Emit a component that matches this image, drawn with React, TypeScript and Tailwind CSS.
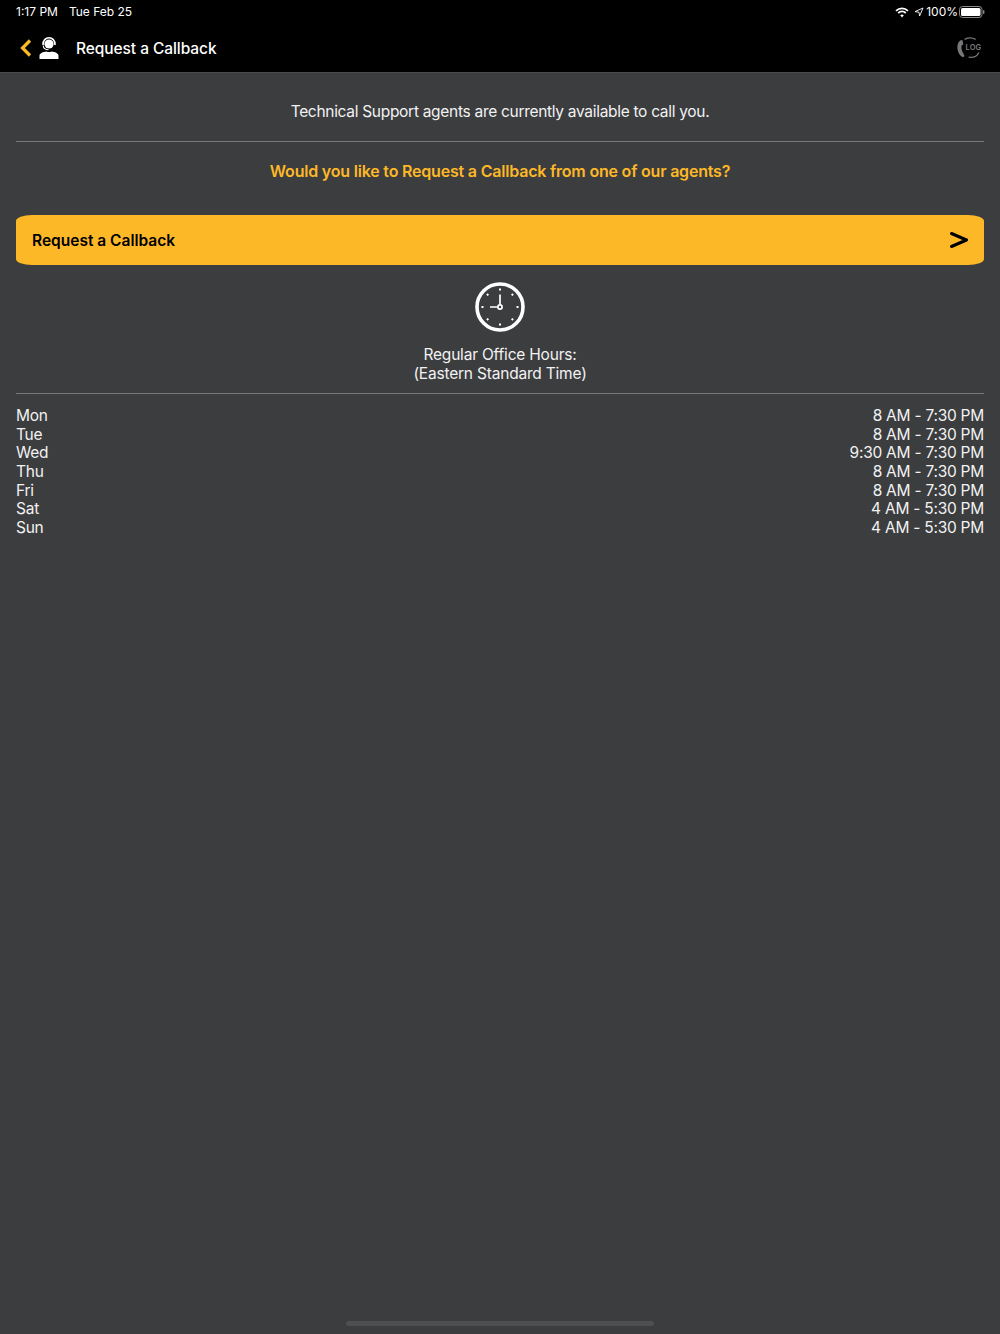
const hours = [
  ["Mon", "8 AM - 7:30 PM"],
  ["Tue", "8 AM - 7:30 PM"],
  ["Wed", "9:30 AM - 7:30 PM"],
  ["Thu", "8 AM - 7:30 PM"],
  ["Fri", "8 AM - 7:30 PM"],
  ["Sat", "4 AM - 5:30 PM"],
  ["Sun", "4 AM - 5:30 PM"],
];

function Wifi() {
  return (
    <svg width="14" height="11" viewBox="0 0 14 11" fill="none" stroke="white" strokeWidth="1.8">
      <path d="M1 3.8C4.4 0.6 9.6 0.6 13 3.8" />
      <path d="M3.2 6C5.4 4 8.6 4 10.8 6" />
      <path d="M7 10.6L5.2 8.2C6.2 7.4 7.8 7.4 8.8 8.2Z" fill="white" stroke="none" />
    </svg>
  );
}

function Arrow() {
  return (
    <svg width="10" height="10" viewBox="0 0 10 10" fill="none" stroke="white" strokeWidth="0.9">
      <path d="M9 1L1 4.6L5 5.2L5.6 9Z" strokeLinejoin="round" />
    </svg>
  );
}

function Battery() {
  return (
    <svg width="26" height="12" viewBox="0 0 26 12">
      <rect x="0.5" y="0.5" width="22.5" height="11" rx="3" fill="none" stroke="#8a8a8a" />
      <rect x="2" y="2" width="19.5" height="8" rx="1.6" fill="white" />
      <rect x="24" y="4" width="1.4" height="4" rx="0.7" fill="#8a8a8a" />
    </svg>
  );
}

function Agent() {
  return (
    <svg width="20" height="23" viewBox="0 0 20 23" fill="white">
      <circle cx="10" cy="8" r="4.6" />
      <path d="M4 9C3.4 -0.6 16.6 -0.6 16 9" fill="none" stroke="white" strokeWidth="1.6" />
      <path d="M4.4 9.5C4.6 12.4 6.4 14 9.6 14" fill="none" stroke="black" strokeWidth="2.4" />
      <path d="M4.2 9.5C4.4 12.4 6.2 13.8 9.6 13.8" fill="none" stroke="white" strokeWidth="1.1" />
      <path d="M0.5 23V19.6C0.5 17.2 4.2 15.8 7.4 15.4C9 16.2 11 16.2 12.6 15.4C15.8 15.8 19.5 17.2 19.5 19.6V23Z" />
    </svg>
  );
}

function LogIcon() {
  return (
    <svg width="24" height="22" viewBox="0 0 24 22" fill="none">
      <path d="M7.6 2.6C10 0.6 14.6 0 18.6 2.4" stroke="#77787a" strokeWidth="1.3" />
      <path d="M21.8 15.4C20.4 18.8 16.4 20.8 11.6 20.2" stroke="#77787a" strokeWidth="1.3" />
      <path d="M3.6 3.2C0.8 5 0 9 0.6 12.6C1.2 16.2 3.2 19.4 6 20.2L7.6 19L5.6 15C4.4 12.4 4 10 4.8 8.2L6.2 7.4L5.6 3.2Z" fill="#77787a" />
      <text x="8.6" y="13" fontSize="7.6" fontWeight="600" fill="#77787a" fontFamily="Inter, sans-serif">LOG</text>
    </svg>
  );
}

function Clock() {
  const ticks = [0, 45, 90, 135, 180, 225, 270, 315];
  return (
    <svg width="50" height="50" viewBox="0 0 50 50" fill="none" stroke="white">
      <circle cx="25" cy="25" r="23" strokeWidth="3.6" />
      {ticks.map((a) => (
        <rect
          key={a}
          x="24"
          y="6.5"
          width="2"
          height="2"
          fill="white"
          stroke="none"
          transform={`rotate(${a} 25 25)`}
        />
      ))}
      <path d="M25 22.5V12.5M22.5 25H15" strokeWidth="1.7" />
      <circle cx="25" cy="25" r="2.1" strokeWidth="1.7" />
    </svg>
  );
}

export default function App() {
  return (
    <div className="min-h-[1334px] bg-[#3c3d3f] text-white font-['Inter',sans-serif] relative">
      <header className="bg-black h-[73px] border-b border-[#4a4a4c]">
        <div className="h-6 pl-4 pr-[15px] flex justify-between items-center text-[12px]">
          <div className="flex gap-[11px]">
            <span>1:17 PM</span>
            <span>Tue Feb 25</span>
          </div>
          <div className="flex items-center">
            <Wifi />
            <div className="ml-[5px]">
              <Arrow />
            </div>
            <span className="ml-[2px] mr-[1px] text-[12px]">100%</span>
            <Battery />
          </div>
        </div>
        <div className="h-12 flex items-center pl-[20px] pr-[19px]">
          <svg width="12" height="18" viewBox="0 0 12 18" fill="none" stroke="#fdb827" strokeWidth="3.2">
            <path d="M10 1.5L2.5 9L10 16.5" />
          </svg>
          <div className="ml-[7px] mt-[-2px]">
            <Agent />
          </div>
          <h1 className="ml-[17px] pt-[2px] text-[15.5px] tracking-[-0.07px] font-medium">Request a Callback</h1>
          <div className="ml-auto">
            <LogIcon />
          </div>
        </div>
      </header>

      <main className="px-4">
        <p className="h-[69px] border-b border-[#77787a] flex items-center justify-center text-[15.5px] tracking-[-0.3px] text-[#f2f2f2] pt-[9px]">
          Technical Support agents are currently available to call you.
        </p>
        <p className="h-[59px] pb-[2px] flex items-center justify-center text-[16px] tracking-[-0.2px] font-semibold text-[#fdb827]">
          Would you like to Request a Callback from one of our agents?
        </p>
        <button className="mt-[14px] w-full h-[50px] bg-[#fdb827] rounded-[16px/6px] flex items-center justify-between px-4 text-black text-[15.5px] font-semibold">
          <span className="pt-[2px]">Request a Callback</span>
          <svg width="20" height="18" viewBox="0 0 20 18" fill="none" stroke="black" strokeWidth="3" strokeLinecap="round" strokeLinejoin="round">
            <path d="M3.5 2.5L18.5 9L3.5 15.5" />
          </svg>
        </button>
        <div className="mt-[17px] flex justify-center">
          <Clock />
        </div>
        <p className="mt-[13px] pb-[10px] border-b border-[#77787a] text-center text-[15.5px] tracking-[-0.2px] leading-[19px] text-[#f2f2f2]">
          Regular Office Hours:
          <br />
          (Eastern Standard Time)
        </p>
        <ul className="mt-[13px] text-[15.5px] tracking-[-0.25px] leading-[18.67px] text-[#f2f2f2]">
          {hours.map(([day, time]) => (
            <li key={day} className="flex justify-between">
              <span>{day}</span>
              <span>{time}</span>
            </li>
          ))}
        </ul>
      </main>

      <div className="absolute bottom-[8px] left-[346px] w-[308px] h-[5px] rounded-full bg-[#4e4f51]" />
    </div>
  );
}
